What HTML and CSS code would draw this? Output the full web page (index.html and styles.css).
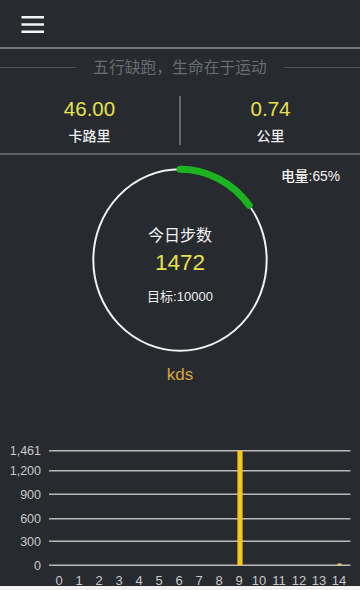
FILE: index.html
```html
<!DOCTYPE html>
<html lang="zh">
<head>
<meta charset="utf-8">
<title>计步</title>
<link rel="stylesheet" href="styles.css">
</head>
<body>
<div class="app">
  <header class="topbar">
    <svg class="menu" width="24" height="20" viewBox="0 0 24 20">
      <path d="M0.5 2.2H23M0.5 9.5H23M0.5 16.8H23" stroke="#f4f4f4" stroke-width="2.4" fill="none"/>
    </svg>
  </header>
  <div class="tagline">
    <span class="rule"></span>
    <span class="tag-text">五行缺跑，生命在于运动</span>
    <span class="rule"></span>
  </div>
  <div class="stats">
    <div class="stat">
      <div class="stat-num">46.00</div>
      <div class="stat-label">卡路里</div>
    </div>
    <div class="divider"></div>
    <div class="stat">
      <div class="stat-num">0.74</div>
      <div class="stat-label">公里</div>
    </div>
  </div>
  <section class="ring-area">
    <div class="spacer"></div>
    <div class="ring-col">
      <div class="ring">
        <svg width="180" height="190" viewBox="0 0 180 190">
          <ellipse cx="90" cy="95" rx="86.7" ry="90.7" fill="none" stroke="#f2f2f2" stroke-width="2"/>
          <path d="M90 4.3 A86.7 90.7 0 0 1 159.2 40.4" fill="none" stroke="#1cb321" stroke-width="7" stroke-linecap="round"/>
        </svg>
        <div class="ring-text">
          <div class="ring-title">今日步数</div>
          <div class="ring-steps">1472</div>
          <div class="ring-goal">目标:10000</div>
        </div>
      </div>
      <div class="kds">kds</div>
    </div>
    <div class="battery">电量:65%</div>
  </section>
  <svg class="chart" width="360" height="201" viewBox="0 385 360 201">
    <g stroke="#b9b9b9" stroke-width="1.5">
      <line x1="49" y1="450.7" x2="350.5" y2="450.7"/>
      <line x1="49" y1="470.7" x2="350.5" y2="470.7"/>
      <line x1="49" y1="494.3" x2="350.5" y2="494.3"/>
      <line x1="49" y1="518.7" x2="350.5" y2="518.7"/>
      <line x1="49" y1="541.3" x2="350.5" y2="541.3"/>
      <line x1="49" y1="565.3" x2="350.5" y2="565.3"/>
    </g>
    <rect x="237.4" y="450.5" width="5.2" height="115" fill="#f1c71b"/>
    <rect x="337.5" y="563.5" width="4" height="2" fill="#e9d35a"/>
    <g class="ylab" text-anchor="end">
      <text x="41" y="455.2">1,461</text>
      <text x="41" y="475.2">1,200</text>
      <text x="41" y="498.8">900</text>
      <text x="41" y="523.2">600</text>
      <text x="41" y="545.8">300</text>
      <text x="41" y="569.8">0</text>
    </g>
    <g class="xlab" text-anchor="middle">
      <text x="59" y="584.5">0</text>
      <text x="79" y="584.5">1</text>
      <text x="99" y="584.5">2</text>
      <text x="119" y="584.5">3</text>
      <text x="139" y="584.5">4</text>
      <text x="159" y="584.5">5</text>
      <text x="179" y="584.5">6</text>
      <text x="199" y="584.5">7</text>
      <text x="219" y="584.5">8</text>
      <text x="239" y="584.5">9</text>
      <text x="259" y="584.5">10</text>
      <text x="279" y="584.5">11</text>
      <text x="299" y="584.5">12</text>
      <text x="319" y="584.5">13</text>
      <text x="339" y="584.5">14</text>
    </g>
  </svg>
</div>
</body>
</html>
```
FILE: styles.css
```css
html, body {
  margin: 0;
  padding: 0;
  background: #f2f2f2;
}
body {
  font-family: "Liberation Sans", "Noto Sans CJK SC", sans-serif;
  width: 360px;
}
.app {
  width: 360px;
  height: 586px;
  background: #272a2f;
  overflow: hidden;
}
.topbar {
  height: 47px;
  border-bottom: 2px solid #74777b;
  box-sizing: content-box;
  display: flex;
  align-items: flex-start;
}
.menu {
  display: block;
  margin-top: 14.5px;
  margin-left: 20.5px;
}
.tagline {
  height: 36px;
  display: flex;
  align-items: center;
  gap: 17px;
}
.rule {
  flex: 1;
  height: 1px;
  background: #4f5357;
}
.tag-text {
  font-family: "Noto Sans CJK SC", sans-serif;
  font-size: 15.8px;
  line-height: 20px;
  color: #696c70;
  white-space: nowrap;
}
.stats {
  height: 68px;
  border-bottom: 2px solid #5f6367;
  display: grid;
  grid-template-columns: 1fr 2px 1fr;
}
.stat {
  display: flex;
  flex-direction: column;
  align-items: center;
  padding-top: 12px;
}
.stat-num {
  font-size: 20.5px;
  line-height: 24px;
  color: #e6e14c;
}
.stat-label {
  margin-top: 4px;
  font-family: "Noto Sans CJK SC", sans-serif;
  font-size: 14px;
  font-weight: 500;
  line-height: 20px;
  color: #ececec;
}
.divider {
  margin-top: 11px;
  height: 49px;
  background: #666a6e;
}
.ring-area {
  display: grid;
  grid-template-columns: 1fr 180px 1fr;
  padding-top: 10px;
}
.ring-col {
  display: flex;
  flex-direction: column;
  align-items: center;
}
.ring {
  position: relative;
  width: 180px;
  height: 190px;
}
.ring svg {
  display: block;
}
.ring-text {
  position: absolute;
  left: 0;
  right: 0;
  top: 0;
  display: flex;
  flex-direction: column;
  align-items: center;
  padding-top: 58px;
}
.ring-title {
  font-family: "Noto Sans CJK SC", sans-serif;
  font-size: 16px;
  font-weight: 400;
  line-height: 22px;
  color: #f2f2f2;
}
.ring-steps {
  margin-top: 4px;
  font-size: 22.5px;
  line-height: 28px;
  color: #e6e14c;
}
.ring-goal {
  margin-top: 11px;
  font-size: 13px;
  line-height: 18px;
  color: #efefef;
}
.kds {
  margin-top: 10px;
  font-size: 17px;
  line-height: 20px;
  color: #d8a53b;
}
.battery {
  justify-self: end;
  align-self: start;
  margin-top: 3px;
  margin-right: 20px;
  font-size: 13.8px;
  font-weight: 500;
  line-height: 18px;
  color: #f2f2f2;
  white-space: nowrap;
}
.chart {
  display: block;
}
.ylab text {
  font-family: "Liberation Sans", sans-serif;
  font-size: 12.5px;
  fill: #c9c9c9;
}
.xlab text {
  font-family: "Liberation Sans", sans-serif;
  font-size: 13px;
  fill: #c9c9c9;
}
```
